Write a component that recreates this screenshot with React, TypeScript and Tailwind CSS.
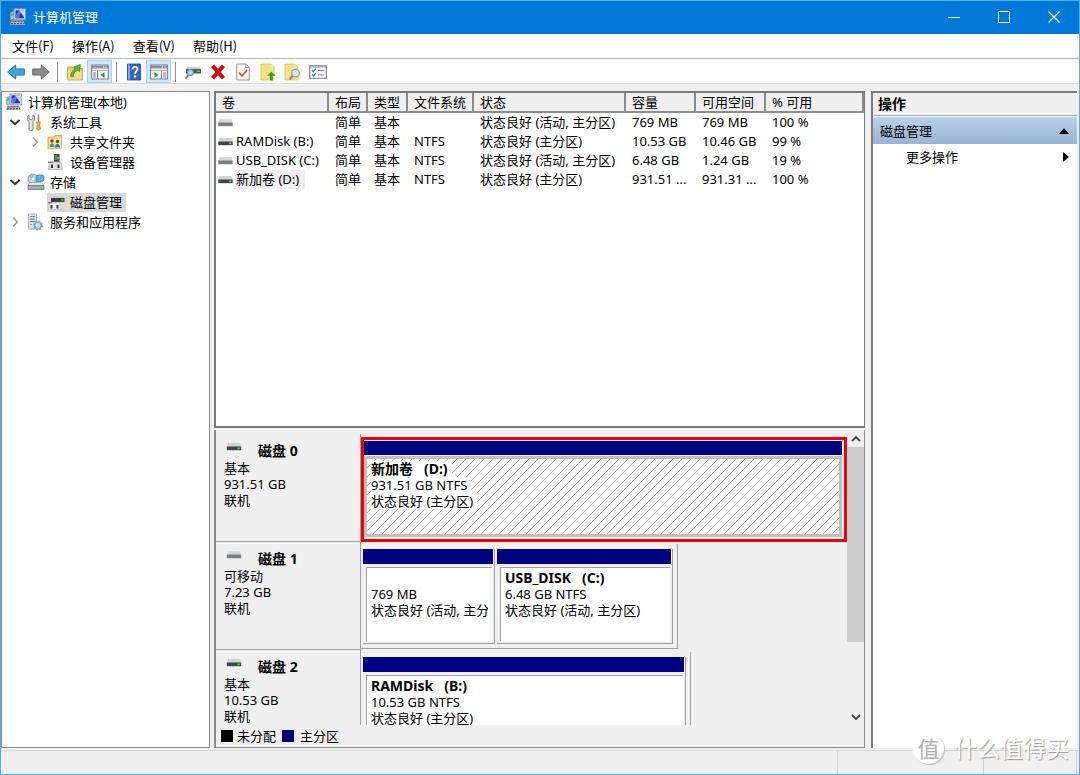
import React from "react";

type IconProps = { className?: string };

const ComputerIcon = ({ className = "size-[18px]" }: IconProps) => (
  <svg viewBox="0 0 18 18" className={className} aria-hidden="true">
    <path d="M1.500 4.500L5 3v8l-3.500 1z" fill="#b9c2cb" stroke="#87919b" strokeWidth=".6" />
    <path d="M5 .8h11.500v11H5z" fill="#d9dfe6" stroke="#8b97a3" strokeWidth=".8" />
    <path d="M6.500 2.300h8.500v8H6.500z" fill="#1a35b8" />
    <path d="M6.500 10.300V7l4-4.700H13L9.500 10.300z" fill="#4c78ea" />
    <path d="M10 2.300h5v7z" fill="#dfe8ff" opacity=".85" />
    <path d="M2 6l2.500-1v2L2 8z" fill="#35c13a" />
    <path d="M2 12.500h12l2 4.500H1z" fill="#b2b5b8" />
    <path d="M2.500 13.500h11.500M2 15.700h13" stroke="#55595e" strokeWidth="1.200" strokeDasharray="2 1" />
  </svg>
);

const ToolsIcon = () => (
  <svg viewBox="0 0 16 18" className="h-[18px] w-4" aria-hidden="true">
    <path d="M2 2v3.500l2 1.500 2-1.500V2l1.500 1v4L6 8.500V16a1.500 1.500 0 0 1-4 0V8.500L.7 7V3z" fill="#e3e3e3" stroke="#777" strokeWidth=".9" />
    <path d="M11.500 1.500v8" stroke="#8c8c8c" strokeWidth="1.600" />
    <path d="M9.500 9h4l-.7 2.500.7 4.500-2 1.500-2-1.500.7-4.500z" fill="#f7a917" stroke="#c97b08" strokeWidth=".6" />
  </svg>
);

const SharedFolderIcon = () => (
  <svg viewBox="0 0 16 16" className="size-4" aria-hidden="true">
    <path d="M1 3h6l1-1.500h6.500V14L1 15z" fill="#f4d47c" stroke="#c49f43" strokeWidth=".7" />
    <path d="M2 5h12v9H2z" fill="#fae7a6" />
    <circle cx="5" cy="7" r="1.700" fill="#6b4b2c" />
    <path d="M2.500 13c0-5 5-5 5 0z" fill="#3f9b9a" />
    <circle cx="10.500" cy="7.500" r="1.700" fill="#6b4b2c" />
    <path d="M8 13.500c0-5 5-5 5 0z" fill="#3b73b9" />
  </svg>
);

const DeviceIcon = () => (
  <svg viewBox="0 0 16 16" className="size-4" aria-hidden="true">
    <path d="M7 0h5.500v8H7z" fill="#484b4f" />
    <path d="M8 1h2v5H8z" fill="#767b80" />
    <path d="M10 3h2v2h-2z" fill="#50c850" />
    <path d="M2.500 8h11.500l1.500 7.500h-14z" fill="#dfe1e4" stroke="#a4a8ad" strokeWidth=".7" />
    <path d="M4 10.500h2V14H4zM10.500 10.500h2V14h-2z" fill="#33363a" />
    <path d="M1 7.500h5V9H1z" fill="#7c8186" />
  </svg>
);

const StorageIcon = () => (
  <svg viewBox="0 0 18 18" className="size-[18px]" aria-hidden="true">
    <circle cx="6" cy="6" r="5" fill="#cbd3da" stroke="#77828d" strokeWidth=".8" />
    <path d="M6 6L2 3.500A5 5 0 0 1 6 1z" fill="#83c8a4" />
    <circle cx="6" cy="6" r="1.300" fill="#fff" />
    <path d="M9 3.500l1.500-1.500H16l1 1.500V7l-1.500 1.500H9z" fill="#53b5e4" stroke="#2e81ae" strokeWidth=".7" />
    <path d="M2.500 9.500h12l2.500 3H1z" fill="#e6e9eb" stroke="#8d9296" strokeWidth=".6" />
    <path d="M1 12.500h16v4H1z" fill="#a9adb1" stroke="#666b70" strokeWidth=".7" />
    <path d="M12.500 13.800h3v1.500h-3z" fill="#42d442" />
  </svg>
);

const DiskMgmtIcon = () => (
  <svg viewBox="0 0 18 16" className="h-4 w-[18px]" aria-hidden="true">
    <path d="M5 2h11.500l1 2H4z" fill="#c9cccf" />
    <path d="M4 4h13.500v4H4z" fill="#3b3e41" />
    <path d="M14 5.300h2.500v1.200H14z" fill="#44dd44" />
    <path d="M2.500 9h10.500l1.500 6.500h-13z" fill="#f0f1f2" stroke="#b1b4b7" strokeWidth=".6" />
    <path d="M3.500 11h2v3.500h-2zM9.500 11h2v3.500h-2z" fill="#35383b" />
    <path d="M1 8h4v1.300H1z" fill="#6f7478" />
  </svg>
);

const ServicesIcon = () => (
  <svg viewBox="0 0 16 18" className="h-[18px] w-4" aria-hidden="true">
    <path d="M1.500 1h8v15h-8z" fill="#d9e0e7" stroke="#98a4b0" strokeWidth=".8" />
    <path d="M3 3.500h5M3 6h5M3 8.500h5" stroke="#6b7c8d" />
    <path d="M3 11h2v1H3z" fill="#4ac14a" />
    <circle cx="11" cy="12.500" r="3.300" fill="#dcebfa" stroke="#7aa6d4" strokeWidth="1.700" />
    <circle cx="11" cy="12.500" r="4.500" fill="none" stroke="#7aa6d4" strokeWidth="1.300" strokeDasharray="1.800 1.730" />
    <circle cx="11" cy="12.500" r="1.200" fill="#fff" stroke="#7aa6d4" strokeWidth=".5" />
  </svg>
);

const DriveIcon = ({ led, className }: { led?: boolean; className: string }) => (
  <svg viewBox="0 0 15 8" className={className} aria-hidden="true">
    <path d="M1.500 0h12l1.200 4H.3z" fill={led ? "#d0d3d5" : "#d6d8dc"} />
    <path d="M.3 3.500h14.400v3.700H.3z" fill={led ? "#424548" : "#7b7d81"} />
    {led && <path d="M11 4.500h2.200v1.700H11z" fill="#3cf03c" />}
  </svg>
);

const ArrowIcon = ({ back }: { back?: boolean }) => (
  <svg viewBox="0 0 18 16" className="h-4 w-[18px]" aria-hidden="true">
    {back ? (
      <path d="M.7 8l8-7v3.900h8.600v6.200H8.700V15z" fill="#37a5e4" stroke="#1f6fa8" strokeWidth=".9" strokeLinejoin="round" />
    ) : (
      <path d="M17.300 8l-8-7v3.900H.7v6.200h8.600V15z" fill="#8c8c8c" stroke="#626262" strokeWidth=".9" strokeLinejoin="round" />
    )}
  </svg>
);

const UpFolderIcon = () => (
  <svg viewBox="0 0 16 18" className="h-[18px] w-4" aria-hidden="true">
    <path d="M.6 4h5l1.500 1.500h8.300V17H.6z" fill="#efc96b" stroke="#bb923a" strokeWidth=".8" />
    <path d="M1 8h14v8.500H1z" fill="#f5d88c" />
    <path d="M3.500 13c.5-4 2.500-6 5-7L6.500 4l7-2.500L12.500 8.500l-2-1.300C8 8 6.500 10 6 14z" fill="#59c131" stroke="#2f8619" strokeWidth=".7" />
  </svg>
);

const PaneIcon = ({ right }: { right?: boolean }) => (
  <svg viewBox="0 0 18 16" className="h-4 w-[18px]" aria-hidden="true">
    <path d="M.6 1h16.800v14H.6z" fill="#f7f7f7" stroke="#7d848b" strokeWidth="1.100" />
    <path d="M1 1.500h16v3H1z" fill="#8a929a" />
    <path d="M12 3h1M14.500 3h1" stroke="#fff" />
    <path d="M1 6.500h16" stroke="#a9afb4" />
    <path d={right ? "M11.500 7v8" : "M6.500 7v8"} stroke="#7d848b" />
    {right ? (
      <>
        <path d="M4.500 8v6l4-3z" fill="#2e9e22" />
        <path d="M13 9h3M13 11h3M13 13h3" stroke="#6d757c" strokeWidth=".9" />
      </>
    ) : (
      <>
        <path d="M13.500 8v6l-4-3z" fill="#2e9e22" />
        <path d="M2 9h3M2 11h3M2 13h3" stroke="#6d757c" strokeWidth=".9" />
      </>
    )}
  </svg>
);

const HelpIcon = () => (
  <svg viewBox="0 0 14 18" className="h-[18px] w-3.5" aria-hidden="true">
    <path d="M.5 1h13v16H.5z" fill="#3564c8" stroke="#20418f" strokeWidth=".8" />
    <path d="M1 1.500h2v15H1z" fill="#86a7ea" />
    <path d="M5.500 6.500c0-3.500 5-3.300 5-.5 0 2-2.500 2.200-2.500 4.700" fill="none" stroke="#fff" strokeWidth="1.900" />
    <circle cx="8" cy="13.500" r="1.200" fill="#fff" />
  </svg>
);

const DriveSearchIcon = () => (
  <svg viewBox="0 0 18 16" className="h-4 w-[18px]" aria-hidden="true">
    <path d="M3.500 3h12l1.500 2H2z" fill="#cfd2d4" />
    <path d="M2 5h15v4.500H2z" fill="#54585b" />
    <path d="M13 6.500h3V8h-3z" fill="#3ee03e" />
    <circle cx="6.500" cy="8.500" r="3" fill="#b9d9ed" stroke="#76899a" strokeWidth="1.100" />
    <path d="M4.500 11L1.300 14.500" stroke="#76899a" strokeWidth="2" />
  </svg>
);

const DeleteIcon = () => (
  <svg viewBox="0 0 16 16" className="size-4" aria-hidden="true">
    <path d="M1 3l3-2.500 4 4.300 4-4.300L15 3l-4.300 5L15 13l-3 2.500-4-4.300-4 4.300L1 13l4.300-5z" fill="#d4090e" />
  </svg>
);

const CheckPageIcon = () => (
  <svg viewBox="0 0 14 18" className="h-[18px] w-3.5" aria-hidden="true">
    <path d="M.7 1h9l3.600 3.500V17H.7z" fill="#fbfbfb" stroke="#85898d" strokeWidth=".9" />
    <path d="M9.700 1v3.500h3.600" fill="none" stroke="#85898d" strokeWidth=".8" />
    <path d="M3 9.500l3 3.500 5-6" fill="none" stroke="#ee5423" strokeWidth="1.900" />
  </svg>
);

const NoteUpIcon = () => (
  <svg viewBox="0 0 16 18" className="h-[18px] w-4" aria-hidden="true">
    <path d="M1 1h9.500L14 4v13H1z" fill="#fbe088" stroke="#dcbc5b" strokeWidth=".8" />
    <path d="M10.500 1v3.500H14" fill="#fff2c3" />
    <path d="M11.300 8.500l4.200 4.200h-2.700V17.500H9.800v-4.800H7.100z" fill="#2fa51d" />
  </svg>
);

const NoteSearchIcon = () => (
  <svg viewBox="0 0 17 18" className="h-[18px] w-[17px]" aria-hidden="true">
    <path d="M1 1h9.500L14 4v13H1z" fill="#fbe088" stroke="#dcbc5b" strokeWidth=".8" />
    <path d="M10.500 1v3.500H14" fill="#fff2c3" />
    <path d="M9 12.500L5.500 16.500" stroke="#7d8891" strokeWidth="2" />
    <circle cx="11.500" cy="10" r="3.800" fill="#cfe9f8" stroke="#83939f" strokeWidth="1.100" />
  </svg>
);

const ListIcon = () => (
  <svg viewBox="0 0 18 14" className="h-3.5 w-[18px]" aria-hidden="true">
    <path d="M.7.7h16.600v12.600H.7z" fill="#fdfdfd" stroke="#737b83" strokeWidth="1.100" />
    <path d="M1 2h16" stroke="#8f969d" />
    <path d="M3 5l1.300 1.500L7 3.700M3 9.500l1.300 1.500L7 8.200" fill="none" stroke="#2b83d3" strokeWidth="1.200" />
    <path d="M9 5.500h6M9 10h6" stroke="#757d85" strokeWidth="1.100" />
  </svg>
);

const Chevron = ({ open }: { open?: boolean }) => (
  <svg viewBox="0 0 12 12" className="size-3" aria-hidden="true">
    <path
      d={open ? "M1.500 4L6 8.300 10.500 4" : "M4 1.500L8.300 6 4 10.500"}
      fill="none"
      stroke={open ? "#333" : "#9a9a9a"}
      strokeWidth={open ? 1.900 : 1.500}
    />
  </svg>
);

type ToolEntry = { label: string; icon: React.ReactNode; active?: boolean } | "sep";

const tools: ToolEntry[] = [
  { label: "后退", icon: <ArrowIcon back /> },
  { label: "前进", icon: <ArrowIcon /> },
  "sep",
  { label: "上一级", icon: <UpFolderIcon /> },
  { label: "显示/隐藏控制台树", icon: <PaneIcon />, active: true },
  "sep",
  { label: "帮助", icon: <HelpIcon /> },
  { label: "显示/隐藏操作窗格", icon: <PaneIcon right />, active: true },
  "sep",
  { label: "重新扫描磁盘", icon: <DriveSearchIcon /> },
  { label: "删除", icon: <DeleteIcon /> },
  { label: "属性", icon: <CheckPageIcon /> },
  { label: "打开", icon: <NoteUpIcon /> },
  { label: "浏览", icon: <NoteSearchIcon /> },
  { label: "设置", icon: <ListIcon /> },
];

type TreeEntry = {
  label: string;
  icon: React.ReactNode;
  nested?: boolean;
  state?: "open" | "closed";
  selected?: boolean;
};

const tree: TreeEntry[] = [
  { label: "系统工具", icon: <ToolsIcon />, state: "open" },
  { label: "共享文件夹", icon: <SharedFolderIcon />, nested: true, state: "closed" },
  { label: "设备管理器", icon: <DeviceIcon />, nested: true },
  { label: "存储", icon: <StorageIcon />, state: "open" },
  { label: "磁盘管理", icon: <DiskMgmtIcon />, nested: true, selected: true },
  { label: "服务和应用程序", icon: <ServicesIcon />, state: "closed" },
];

const columns = [
  { name: "卷", width: "w-[113px]" },
  { name: "布局", width: "w-[39px]" },
  { name: "类型", width: "w-[40px]" },
  { name: "文件系统", width: "w-[66px]" },
  { name: "状态", width: "w-[152px]" },
  { name: "容量", width: "w-[70px]" },
  { name: "可用空间", width: "w-[70px]" },
  { name: "% 可用", width: "w-auto" },
];

const volumes = [
  { name: "", led: false, cells: ["简单", "基本", "", "状态良好 (活动, 主分区)", "769 MB", "769 MB", "100 %"] },
  { name: "RAMDisk (B:)", led: true, cells: ["简单", "基本", "NTFS", "状态良好 (主分区)", "10.53 GB", "10.46 GB", "99 %"] },
  { name: "USB_DISK (C:)", led: false, cells: ["简单", "基本", "NTFS", "状态良好 (活动, 主分区)", "6.48 GB", "1.24 GB", "19 %"] },
  { name: "新加卷 (D:)", led: true, selected: true, cells: ["简单", "基本", "NTFS", "状态良好 (主分区)", "931.51 ...", "931.31 ...", "100 %"] },
];

function Toolbar() {
  return (
    <div className="flex h-[25px] items-center border-b border-[#dcdcdc] bg-white pt-px pl-0.5" role="toolbar">
      {tools.map((t, i) =>
        t === "sep" ? (
          <span key={i} className="mx-1 h-5 w-px bg-[#8f8f8f]" />
        ) : (
          <button
            key={i}
            type="button"
            aria-label={t.label}
            className={
              t.active
                ? "flex h-[23px] w-[25px] items-center justify-center border border-[#a4d2f5] bg-[#cfe8fb]"
                : "flex h-[23px] w-[25px] items-center justify-center"
            }
          >
            {t.icon}
          </button>
        ),
      )}
    </div>
  );
}

function Tree() {
  return (
    <nav className="w-[209px] shrink-0 border border-[#828790] bg-white pl-[3px]">
      <ul>
        <li className="flex h-5 items-center">
          <button type="button" className="flex items-center gap-[5px] whitespace-nowrap">
            <ComputerIcon />
            计算机管理(本地)
          </button>
        </li>
        {tree.map((n) => (
          <li key={n.label} className={n.nested ? "flex h-5 items-center pl-6" : "flex h-5 items-center pl-1"}>
            <span className="flex w-[18px]">{n.state && <Chevron open={n.state === "open"} />}</span>
            <button
              type="button"
              className={
                n.selected
                  ? "flex h-[19px] items-center bg-[#d9d9d9] pr-1 whitespace-nowrap"
                  : "flex items-center whitespace-nowrap"
              }
            >
              <span className="flex w-[23px] items-center">{n.icon}</span>
              {n.label}
            </button>
          </li>
        ))}
      </ul>
    </nav>
  );
}

function VolumeTable() {
  return (
    <div className="h-[337px] border-t-2 border-r border-b-2 border-l-2 border-[#7b7b7b] bg-white">
      <table className="w-full table-fixed border-separate border-spacing-0">
        <thead>
          <tr>
            {columns.map((c) => (
              <th
                key={c.name}
                className={`${c.width} h-5 overflow-hidden border-r-2 border-b-2 border-[#8c8c8c] bg-[#f0f0f0] p-0 pl-1.5 text-left leading-4 font-normal whitespace-nowrap`}
              >
                {c.name}
              </th>
            ))}
          </tr>
        </thead>
        <tbody>
          {volumes.map((v, i) => (
            <tr key={i} className="h-[19px] leading-[19px]">
              <td className="p-0 pl-0.5">
                <div className="flex items-center gap-0.5 whitespace-nowrap">
                  <DriveIcon led={v.led} className="h-2 w-[15px] shrink-0" />
                  <span className={v.selected ? "bg-[#f0f0f0] pr-1.5 pl-px" : "pl-px"}>{v.name}</span>
                </div>
              </td>
              {v.cells.map((c, j) => (
                <td key={j} className="p-0 pl-1.5 whitespace-nowrap">
                  {c}
                </td>
              ))}
            </tr>
          ))}
        </tbody>
      </table>
    </div>
  );
}

function DiskLabel({ name, led, lines }: { name: string; led?: boolean; lines: string[] }) {
  return (
    <div className="h-[108px] w-[145px] shrink-0 border-r border-b border-[#a0a0a0] pt-[9px] pl-2 leading-4">
      <div className="flex h-[17px] gap-4">
        <DriveIcon led={led} className="ml-0.5 h-2 w-4" />
        <strong className="text-sm leading-4">{name}</strong>
      </div>
      {lines.map((l) => (
        <div key={l}>{l}</div>
      ))}
    </div>
  );
}

function Volume({ title, size, status, width }: { title: string; size: string; status: string; width: string }) {
  return (
    <div className={`${width} flex flex-col border-r border-b border-[#a0a0a0] pr-0.5 pb-0.5`}>
      <div className="-mr-0.5 h-[15px] border-r border-white bg-[#000080]" />
      <div className="mt-[3px] ml-[3px] min-h-0 flex-1 border-t border-l border-[#a0a0a0] bg-white pt-0.5 pr-1 pl-1 leading-4">
        <div className="overflow-hidden whitespace-nowrap">
          <div className="h-4 text-sm leading-4 font-bold whitespace-pre">{title}</div>
          <div>{size}</div>
          <div>{status}</div>
        </div>
      </div>
    </div>
  );
}

const ScrollArrow = ({ down }: { down?: boolean }) => (
  <button type="button" aria-label={down ? "向下滚动" : "向上滚动"} className="flex h-[17px] items-center justify-center">
    <svg viewBox="0 0 12 12" className="size-3" aria-hidden="true">
      <path d={down ? "M2 4l4 4 4-4" : "M2 8l4-4 4 4"} fill="none" stroke="#444" strokeWidth="1.900" />
    </svg>
  </button>
);

function DiskView() {
  return (
    <div className="flex min-h-0 flex-1 flex-col border-r border-b border-l-2 border-[#8a8a8a]">
      <div className="flex h-[295px] pt-1">
        <div className="min-w-0 flex-1 overflow-hidden">
          <div className="flex h-[108px]">
            <DiskLabel name="磁盘 0" led lines={["基本", "931.51 GB", "联机"]} />
            <div className="mt-[3px] flex h-[105px] min-w-0 flex-1 flex-col border-[3px] border-[#f40000] pt-px pr-0.5 pb-0.5">
              <div className="h-[14px] bg-[#000080]" />
              <div className="mt-px min-h-0 flex-1 border-[3px] border-[#bfbfbf] bg-white bg-[linear-gradient(135deg,#fff_45%,#b0b0b0_45%,#b0b0b0_55%,#fff_55%)] bg-[size:9px_9px] pt-0.5 pl-1 leading-4">
                <div className="h-4">
                  <strong className="inline-block bg-white pr-1 text-sm leading-4 whitespace-pre">{"新加卷   (D:)"}</strong>
                </div>
                <div className="h-4">
                  <span className="inline-block bg-white pr-1">931.51 GB NTFS</span>
                </div>
                <div className="h-4">
                  <span className="inline-block bg-white pr-1">状态良好 (主分区)</span>
                </div>
              </div>
            </div>
          </div>
          <div className="flex h-[108px]">
            <DiskLabel name="磁盘 1" lines={["可移动", "7.23 GB", "联机"]} />
            <div className="mt-0.5 flex h-[105px] gap-0.5 border-r border-b border-[#a0a0a0] pt-[5px] pr-1 pb-1 pl-0.5">
              <Volume width="w-[132px]" title="" size="769 MB" status="状态良好 (活动, 主分区)" />
              <Volume width="w-[176px]" title="USB_DISK   (C:)" size="6.48 GB NTFS" status="状态良好 (活动, 主分区)" />
            </div>
          </div>
          <div className="flex h-[108px]">
            <DiskLabel name="磁盘 2" led lines={["基本", "10.53 GB", "联机"]} />
            <div className="mt-0.5 flex h-[105px] border-r border-b border-[#a0a0a0] pt-[5px] pr-1 pb-1 pl-0.5">
              <Volume width="w-[323px]" title="RAMDisk   (B:)" size="10.53 GB NTFS" status="状态良好 (主分区)" />
            </div>
          </div>
        </div>
        <div className="-mt-1 flex w-[17px] flex-col">
          <ScrollArrow />
          <div className="h-[195px] bg-[#cdcdcd]" />
          <div className="flex-1" />
          <ScrollArrow down />
        </div>
      </div>
      <div className="flex flex-1 items-center gap-1 pb-px pl-[5px]">
        <span className="size-3 bg-black" />
        <span>未分配</span>
        <span className="ml-0.5 size-3 bg-[#000080]" />
        <span className="ml-0.5">主分区</span>
      </div>
    </div>
  );
}

function Actions() {
  return (
    <aside className="w-[206px] shrink-0 border-t-2 border-l-2 border-[#7b7b7b] bg-white">
      <h2 className="flex h-[23px] items-center border-b border-[#a8a8a8] bg-[#f0f0f0] pl-[5px] text-sm leading-4 font-bold">操作</h2>
      <button
        type="button"
        className="mt-px flex h-[27px] w-full items-center justify-between bg-linear-to-b from-[#b9d1ea] to-[#98b4d4] pr-2 pl-[7px]"
      >
        磁盘管理
        <svg viewBox="0 0 10 6" className="h-1.5 w-2.5" aria-hidden="true">
          <path d="M5 0l5 6H0z" fill="#000" />
        </svg>
      </button>
      <button type="button" className="flex h-[26px] w-full items-center justify-between pr-2 pl-[33px]">
        更多操作
        <svg viewBox="0 0 6 10" className="h-2.5 w-1.5" aria-hidden="true">
          <path d="M0 0l6 5-6 5z" fill="#000" />
        </svg>
      </button>
    </aside>
  );
}

export default function App() {
  return (
    <div className="relative flex min-h-screen flex-col overflow-hidden border border-[#4db1ee] bg-[#f0f0f0] font-['Noto_Sans','Noto_Sans_CJK_SC',sans-serif] text-[13px] leading-[18px] text-black">
      <header className="flex h-[33px] items-center justify-between bg-[#0078d7] pb-0.5 pl-2 text-white">
        <div className="flex items-center gap-1.5">
          <ComputerIcon />
          <h1>计算机管理</h1>
        </div>
        <div className="flex">
          <button type="button" aria-label="最小化" className="flex h-[30px] w-[50px] items-center justify-center">
            <svg viewBox="0 0 12 12" className="size-3"><path d="M0 6.500h12" stroke="#fff" /></svg>
          </button>
          <button type="button" aria-label="最大化" className="flex h-[30px] w-[50px] items-center justify-center">
            <svg viewBox="0 0 12 12" className="size-3"><path d="M.5.500h11v11H.5z" fill="none" stroke="#fff" /></svg>
          </button>
          <button type="button" aria-label="关闭" className="flex h-[30px] w-[50px] items-center justify-center">
            <svg viewBox="0 0 12 12" className="size-3"><path d="M.5.500l11 11M11.500.500l-11 11" stroke="#fff" strokeWidth="1.200" /></svg>
          </button>
        </div>
      </header>
      <div className="flex h-[25px] items-center gap-[18px] border-b border-[#b5b5b5] bg-white pb-px pl-[11px] font-['Noto_Sans_CJK_SC',sans-serif]">
        {["文件(F)", "操作(A)", "查看(V)", "帮助(H)"].map((m) => (
          <button key={m} type="button">
            {m}
          </button>
        ))}
      </div>
      <Toolbar />
      <main className="flex flex-1 gap-1 pt-[7px] pr-0.5">
        <Tree />
        <section className="mr-0.5 flex min-w-0 flex-1 flex-col gap-0.5">
          <VolumeTable />
          <DiskView />
        </section>
        <Actions />
      </main>
      <footer className="mt-0.5 flex h-6 justify-end border-t border-[#d7d7d7] pr-0.5">
        <div className="w-[146px] border-l border-[#d0d0d0]" />
        <div className="w-[94px] border-r border-l border-[#d0d0d0]" />
      </footer>
      <div className="pointer-events-none absolute right-2.5 bottom-2.5 flex items-center gap-2.5 text-white">
        <span className="flex size-[31px] items-center justify-center rounded-full bg-white text-[22px] text-[#b0b0b0] shadow-[1px_1px_1px_#bbb]">
          值
        </span>
        <span className="text-[23px] leading-8 [text-shadow:1px_1px_1px_#999]">什么值得买</span>
      </div>
    </div>
  );
}
